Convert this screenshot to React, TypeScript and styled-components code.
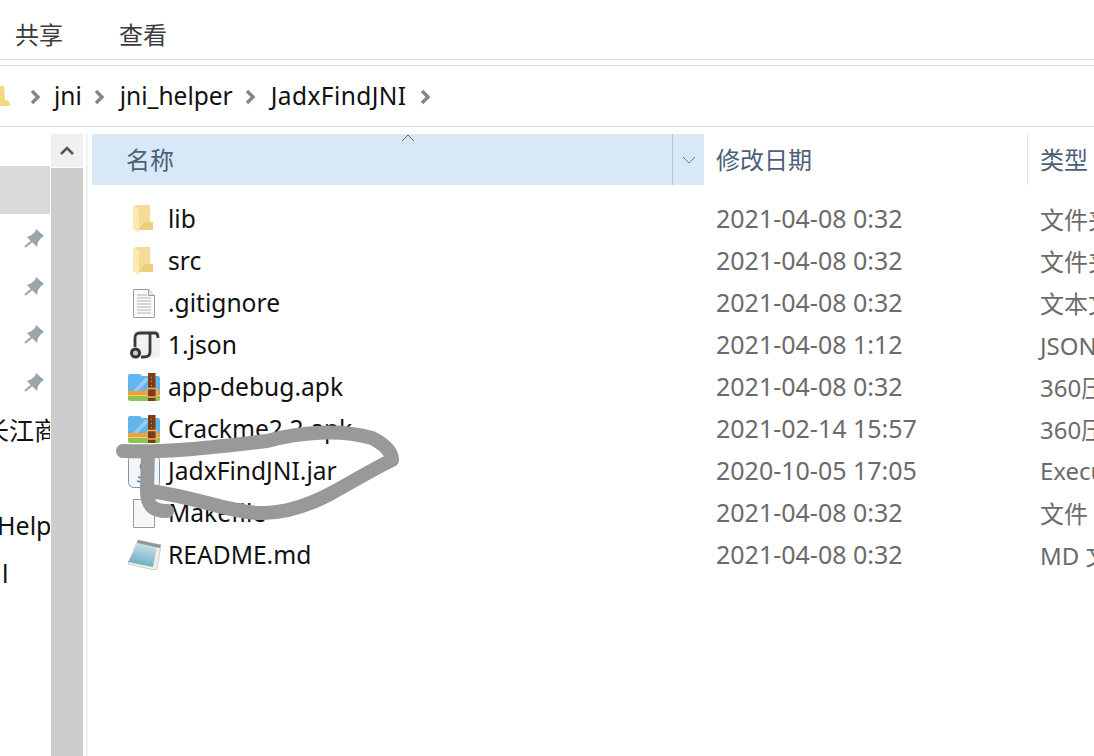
import React from 'react';
import styled, { createGlobalStyle } from 'styled-components';

const GlobalStyle = createGlobalStyle`
  html, body {
    margin: 0;
    padding: 0;
    background: #fff;
    overflow: hidden;
  }
  body {
    font-family: "Noto Sans", "Noto Sans CJK SC", sans-serif;
  }
`;

const Page = styled.div`
  position: relative;
  width: 1094px;
  height: 756px;
  overflow: hidden;
  background: #fff;
`;

// ribbon tabs
const Ribbon = styled.div`
  height: 60px;
  display: flex;
  align-items: center;
  gap: 56px;
  padding: 7px 0 0 15px;
  box-sizing: border-box;
  border-bottom: 1px solid #dadada;
  font-size: 24px;
  color: #3c3c3c;
  font-family: "Noto Sans CJK SC", sans-serif;
`;

const AddressBar = styled.div`
  margin-top: 5px;
  height: 60px;
  box-sizing: content-box;
  border-top: 1px solid #dadada;
  border-bottom: 1px solid #dadada;
  display: flex;
  align-items: center;
  font-size: 24.5px;
  color: #111;
`;

const Crumb = styled.span<{ $gap: number; $tracking?: number }>`
  margin-left: ${(p) => p.$gap}px;
  padding-bottom: 2px;
  letter-spacing: ${(p) => p.$tracking ?? 0}px;
  white-space: nowrap;
`;

const Body = styled.div`
  display: flex;
  height: 629px;
`;

// left navigation pane
const NavPane = styled.div`
  width: 50px;
  flex: none;
  padding-top: 39px;
  overflow: hidden;
`;

const NavRow = styled.div<{ $selected?: boolean }>`
  height: 48px;
  display: flex;
  align-items: center;
  background: ${(p) => (p.$selected ? '#d9d9d9' : 'transparent')};
`;

const NavLabel = styled.span<{ $left: number }>`
  flex: none;
  margin-left: ${(p) => p.$left}px;
  padding-bottom: 2px;
  font-size: 25px;
  color: #111;
  white-space: nowrap;
`;

const PinIcon = styled.svg`
  flex: none;
  margin-left: 23px;
`;

const ScrollBar = styled.div`
  width: 32px;
  flex: none;
  margin: 7px 0 0 1px;
  display: flex;
  flex-direction: column;
`;

const ScrollButton = styled.div`
  height: 33px;
  background: #f0f0f0;
  display: flex;
  align-items: center;
  justify-content: center;
`;

const ScrollThumb = styled.div`
  flex: 1;
  margin-top: 1px;
  background: #cdcdcd;
`;

const Splitter = styled.div`
  width: 2px;
  flex: none;
  margin: 7px 3px 0 3px;
  background: #f3f3f3;
`;

const Main = styled.div`
  flex: 1;
  min-width: 0;
  padding-top: 7px;
  margin-left: 1px;
`;

const HeaderRow = styled.div`
  height: 51px;
  display: flex;
  font-size: 24px;
  color: #4c607a;
  font-family: "Noto Sans CJK SC", sans-serif;
`;

const NameHeader = styled.div`
  position: relative;
  width: 612px;
  flex: none;
  display: flex;
  background: #d9e8f6;
`;

const NameTitle = styled.div`
  flex: 1;
  padding-left: 34px;
  line-height: 49px;
`;

const SortCaret = styled.svg`
  position: absolute;
  left: 309px;
  top: 0;
`;

const Dropdown = styled.div`
  width: 31px;
  border-left: 1px solid #b5c5d5;
  display: flex;
  align-items: center;
  justify-content: center;
`;

const DateHeader = styled.div`
  width: 311px;
  flex: none;
  padding-left: 12px;
  line-height: 49px;
  border-right: 1px solid #e3e3e3;
`;

const TypeHeader = styled.div`
  padding-left: 12px;
  line-height: 49px;
  white-space: nowrap;
`;

const FileList = styled.div`
  padding-top: 13px;
`;

const FileRow = styled.div`
  height: 42px;
  display: flex;
  align-items: center;
  font-size: 25px;
  white-space: nowrap;
`;

const IconCell = styled.div`
  width: 76px;
  flex: none;
  padding-left: 36px;
  box-sizing: border-box;
  display: flex;
  align-items: center;
`;

const NameCell = styled.div`
  width: 548px;
  flex: none;
  padding-bottom: 2px;
  font-size: 24.6px;
  color: #111;
`;

const DateCell = styled.div`
  width: 324px;
  flex: none;
  padding-bottom: 2px;
  color: #6b6b6b;
`;

const TypeCell = styled.div`
  padding-bottom: 2px;
  color: #6b6b6b;
  font-size: 24px;
`;

const FileIcon = styled.svg<{ $inset?: number }>`
  flex: none;
  margin-left: ${(p) => p.$inset ?? 0}px;
`;

const Scribble = styled.svg`
  position: absolute;
  left: 0;
  top: 0;
  pointer-events: none;
`;

const Chevron = () => (
  <svg width="12" height="16" viewBox="0 0 12 16">
    <path d="M3 2l6 6-6 6" fill="none" stroke="#858585" strokeWidth="3.4" />
  </svg>
);

const Pin = () => (
  <PinIcon width="22" height="22" viewBox="0 0 22 22">
    <path d="M9 14L2 20" stroke="#9aa3a9" strokeWidth="2" />
    <path d="M13 2L21 9L18 11L15 15L14 20L4 10L8 8.5L12 5Z" fill="#9aa3a9" />
  </PinIcon>
);

const FolderIcon = () => (
  <FileIcon $inset={5} width="21" height="28" viewBox="0 0 21 28">
    <path d="M2 0H17V17H20V25H5z" fill="#f5dc96" />
    <path d="M12 17H20V25H5z" fill="#efcf7c" />
    <path d="M0 1L6 4V28L0 24z" fill="#fbe9b0" />
  </FileIcon>
);

const TextIcon = () => (
  <FileIcon $inset={5} width="22" height="29" viewBox="0 0 22 29">
    <path d="M.5.5h15l6 6v22H.5z" fill="#fafafa" stroke="#9a9a9a" />
    <path d="M15.5.5v6h6" fill="#e8e8e8" stroke="#9a9a9a" />
    <path d="M4 6h10M4 9h14M4 12h14M4 15h14M4 18h14M4 21h14M4 24h14" stroke="#b4b4b4" />
  </FileIcon>
);

const BlankIcon = () => (
  <FileIcon $inset={5} width="22" height="29" viewBox="0 0 22 29">
    <path d="M.5.5h15l6 6v22H.5z" fill="#f7f7f7" stroke="#9a9a9a" />
  </FileIcon>
);

const ScriptIcon = () => (
  <FileIcon $inset={2} width="30" height="30" viewBox="0 0 30 30">
    <rect x="4" y="0" width="26" height="28" rx="4" fill="#f1f1f3" />
    <path d="M5 17V8Q5 3 10 3H25Q28 3 28 8M20 4V22Q20 27 14 27H11" fill="none" stroke="#3a3a3a" strokeWidth="2.8" />
    <circle cx="5.5" cy="23" r="4" fill="#c9c9c9" stroke="#333" strokeWidth="3" />
  </FileIcon>
);

const ArchiveIcon = () => (
  <FileIcon width="32" height="28" viewBox="0 0 32 28">
    <path d="M0 3Q0 1 2 1H12L14 3H30Q32 3 32 5V20H0z" fill="#64b4ee" />
    <path d="M5 18L17 5H22L10 18z" fill="#93cdf4" />
    <rect x="0" y="18" width="32" height="5" fill="#f0a037" />
    <rect x="0" y="22" width="32" height="1" fill="#f6cf62" />
    <path d="M0 23H32V26Q32 28 30 28H2Q0 28 0 26z" fill="#8cc456" />
    <rect x="20" y="0" width="7.5" height="28" fill="#7c3d14" />
    <path d="M23.5 4v1M23.5 8v1M23.5 12v1" stroke="#c99a6c" />
    <rect x="19" y="15.5" width="10" height="8.5" fill="none" stroke="#d9ad63" strokeWidth="1.6" />
  </FileIcon>
);

const JarIcon = () => (
  <FileIcon width="32" height="33" viewBox="0 0 32 33">
    <rect x=".5" y=".5" width="31" height="32" rx="5" fill="#f2f5f9" stroke="#7f93aa" />
    <path d="M10 22q5 2 9 0M9 26q6 2 11 0M14 8q-3 4 0 7t0 5" fill="none" stroke="#5c7da3" strokeWidth="1.6" />
  </FileIcon>
);

const NotepadIcon = () => (
  <FileIcon width="33" height="30" viewBox="0 0 33 30">
    <defs>
      <linearGradient id="notepad-page" x1="0.6" y1="0" x2="0.3" y2="1">
        <stop offset="0" stopColor="#c8e4ee" />
        <stop offset="1" stopColor="#68a5bd" />
      </linearGradient>
    </defs>
    <path d="M10 0L33 5L29 29L26 30L0 24z" fill="#f0f0e8" stroke="#b0b0a8" strokeWidth=".6" />
    <path d="M10 3L29 7L25 27L0 22z" fill="url(#notepad-page)" />
    <path d="M10 0L33 5L32 8L9 3z" fill="#8f9696" />
  </FileIcon>
);

type FileItem = {
  icon: React.ReactNode;
  name: string;
  date: string;
  kind: string;
};

const files: FileItem[] = [
  { icon: <FolderIcon />, name: 'lib', date: '2021-04-08 0:32', kind: '文件夹' },
  { icon: <FolderIcon />, name: 'src', date: '2021-04-08 0:32', kind: '文件夹' },
  { icon: <TextIcon />, name: '.gitignore', date: '2021-04-08 0:32', kind: '文本文档' },
  { icon: <ScriptIcon />, name: '1.json', date: '2021-04-08 1:12', kind: 'JSON 文件' },
  { icon: <ArchiveIcon />, name: 'app-debug.apk', date: '2021-04-08 0:32', kind: '360压缩' },
  { icon: <ArchiveIcon />, name: 'Crackme2.2.apk', date: '2021-02-14 15:57', kind: '360压缩' },
  { icon: <JarIcon />, name: 'JadxFindJNI.jar', date: '2020-10-05 17:05', kind: 'Executable' },
  { icon: <BlankIcon />, name: 'Makefile', date: '2021-04-08 0:32', kind: '文件' },
  { icon: <NotepadIcon />, name: 'README.md', date: '2021-04-08 0:32', kind: 'MD 文件' },
];

export default function App() {
  return (
    <Page>
      <GlobalStyle />
      <Ribbon>
        <span>共享</span>
        <span>查看</span>
      </Ribbon>
      <AddressBar>
        <svg width="10" height="24" viewBox="0 0 10 24">
          <path d="M0 2h4l1 14 4 1 1 5H0z" fill="#f5d77f" />
        </svg>
        <Crumb $gap={19}><Chevron /></Crumb>
        <Crumb $gap={13}>jni</Crumb>
        <Crumb $gap={11}><Chevron /></Crumb>
        <Crumb $gap={15}>jni_helper</Crumb>
        <Crumb $gap={11}><Chevron /></Crumb>
        <Crumb $gap={15} $tracking={0.4}>JadxFindJNI</Crumb>
        <Crumb $gap={13}><Chevron /></Crumb>
      </AddressBar>
      <Body>
        <NavPane>
          <NavRow $selected />
          <NavRow><Pin /></NavRow>
          <NavRow><Pin /></NavRow>
          <NavRow><Pin /></NavRow>
          <NavRow><Pin /></NavRow>
          <NavRow><NavLabel $left={-16}>长江商</NavLabel></NavRow>
          <NavRow />
          <NavRow><NavLabel $left={-3}>Help</NavLabel></NavRow>
          <NavRow><NavLabel $left={2}>l</NavLabel></NavRow>
        </NavPane>
        <ScrollBar>
          <ScrollButton>
            <svg width="16" height="10" viewBox="0 0 16 10">
              <path d="M2 8l6-6 6 6" fill="none" stroke="#555" strokeWidth="2.6" />
            </svg>
          </ScrollButton>
          <ScrollThumb />
        </ScrollBar>
        <Splitter />
        <Main>
          <HeaderRow>
            <NameHeader>
              <NameTitle>名称</NameTitle>
              <SortCaret width="14" height="8" viewBox="0 0 14 8">
                <path d="M1 7l6-6 6 6" fill="none" stroke="#666" />
              </SortCaret>
              <Dropdown>
                <svg width="14" height="8" viewBox="0 0 14 8">
                  <path d="M1 1l6 6 6-6" fill="none" stroke="#6b7a8a" />
                </svg>
              </Dropdown>
            </NameHeader>
            <DateHeader>修改日期</DateHeader>
            <TypeHeader>类型</TypeHeader>
          </HeaderRow>
          <FileList>
            {files.map((file) => (
              <FileRow key={file.name}>
                <IconCell>{file.icon}</IconCell>
                <NameCell>{file.name}</NameCell>
                <DateCell>{file.date}</DateCell>
                <TypeCell>{file.kind}</TypeCell>
              </FileRow>
            ))}
          </FileList>
        </Main>
      </Body>
      <Scribble width="1094" height="756" viewBox="0 0 1094 756">
        <g fill="none" stroke="#999" strokeWidth="14" strokeLinecap="round" strokeLinejoin="round">
          <path d="M123 451C170 453 225 446 267 441C300 432 340 429 372 438C384 444 392 452 392 460C375 468 352 482 330 494C305 507 280 514 258 513C225 511 200 498 150 491" />
          <path d="M148 452L147 490C147 505 152 511 167 511" />
        </g>
      </Scribble>
    </Page>
  );
}
